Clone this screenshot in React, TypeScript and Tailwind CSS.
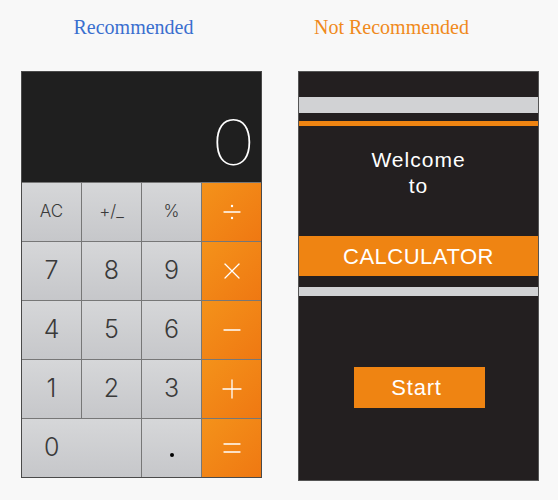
const Op = ({ name }: { name: string }) => (
  <svg width="20" height="20" viewBox="0 0 20 20" fill="none" stroke="white" strokeWidth="1.3" strokeLinecap="round">
    {name === "div" && (
      <>
        <line x1="2" y1="10" x2="18" y2="10" />
        <circle cx="10" cy="4" r="1.2" fill="white" stroke="none" />
        <circle cx="10" cy="16" r="1.2" fill="white" stroke="none" />
      </>
    )}
    {name === "mul" && (
      <>
        <line x1="3" y1="3" x2="17" y2="17" />
        <line x1="17" y1="3" x2="3" y2="17" />
      </>
    )}
    {name === "sub" && <line x1="2" y1="10" x2="18" y2="10" />}
    {name === "add" && (
      <>
        <line x1="1" y1="10" x2="19" y2="10" />
        <line x1="10" y1="1" x2="10" y2="19" />
      </>
    )}
    {name === "eq" && (
      <>
        <line x1="2" y1="6" x2="18" y2="6" />
        <line x1="2" y1="14" x2="18" y2="14" />
      </>
    )}
  </svg>
);

type K = { label: string; op?: string; span?: boolean; small?: boolean };

const keys: K[] = [
  { label: "AC", small: true },
  { label: "+/_", small: true },
  { label: "%", small: true },
  { label: "÷", op: "div" },
  { label: "7" },
  { label: "8" },
  { label: "9" },
  { label: "×", op: "mul" },
  { label: "4" },
  { label: "5" },
  { label: "6" },
  { label: "−", op: "sub" },
  { label: "1" },
  { label: "2" },
  { label: "3" },
  { label: "+", op: "add" },
  { label: "0", span: true },
  { label: "." },
  { label: "=", op: "eq" },
];

const Key = ({ k }: { k: K }) => {
  if (k.op)
    return (
      <div className="bg-gradient-to-br from-[#f4921a] to-[#ef7812] flex items-center justify-center">
        <Op name={k.op} />
      </div>
    );
  return (
    <div
      className={`bg-gradient-to-b from-[#d6d7d9] to-[#c6c7ca] text-[#3a3a3a] font-light flex items-center ${
        k.span ? "col-span-2 justify-start pl-[22px]" : "justify-center"
      } ${k.small ? "text-[17px]" : "text-[25px]"}`}
    >
      {k.label === "." ? <span className="block w-[4px] h-[4px] rounded-full bg-black mt-[14px]" /> : k.label}
    </div>
  );
};

export default function App() {
  return (
    <div className="w-[558px] h-[500px] bg-[#f8f8f8] flex font-['Liberation_Sans',sans-serif]">
      {/* recommended */}
      <div className="w-[298px] pl-[21px] flex flex-col">
        <div className="h-[71px] w-[241px] flex justify-center pr-[16px] pt-[15px]">
          <span className="font-['Liberation_Serif',serif] text-[20px] leading-[24px] text-[#3a6fcf]">
            Recommended
          </span>
        </div>
        <div className="w-[241px] border border-[#4a4a4a] bg-[#1f1f1f] flex flex-col">
          <div className="h-[110px] flex items-end justify-end pr-[5px] pb-[14px]">
            <span className="font-['Inter',sans-serif] font-thin text-[62px] leading-[50px] text-white scale-x-[1.22] origin-right">
              0
            </span>
          </div>
          <div className="grid grid-cols-4 grid-rows-[repeat(5,58px)] gap-px bg-[#777] border-t border-[#777] font-['Inter',sans-serif]">
            {keys.map((k) => (
              <Key key={k.label} k={k} />
            ))}
          </div>
        </div>
      </div>

      {/* not recommended */}
      <div className="w-[241px] flex flex-col">
        <div className="h-[71px] flex justify-center pr-[54px] pt-[15px]">
          <span className="font-['Liberation_Serif',serif] text-[20px] leading-[24px] text-[#f08a1c]">
            Not Recommended
          </span>
        </div>
        <div className="h-[410px] bg-[#231f20] border border-[#555] flex flex-col text-white">
          <div className="h-[25px]" />
          <div className="h-[16px] bg-[#d1d2d4]" />
          <div className="h-[8px]" />
          <div className="h-[5px] bg-[#ef8412]" />
          <div className="h-[110px] flex flex-col items-center pt-[21px] text-[21px] leading-[26px] tracking-[1px]">
            <span>Welcome</span>
            <span>to</span>
          </div>
          <div className="h-[40px] bg-[#ef8412] flex items-center justify-center text-[22px] tracking-[0.5px]">
            CALCULATOR
          </div>
          <div className="h-[11px]" />
          <div className="h-[9px] bg-[#d1d2d4]" />
          <div className="flex-1 pt-[71px] pl-[55px]">
            <div className="w-[131px] h-[41px] bg-[#ef8412] flex items-center justify-center pr-[6px] text-[22px] tracking-[0.8px]">
              Start
            </div>
          </div>
        </div>
      </div>
    </div>
  );
}
